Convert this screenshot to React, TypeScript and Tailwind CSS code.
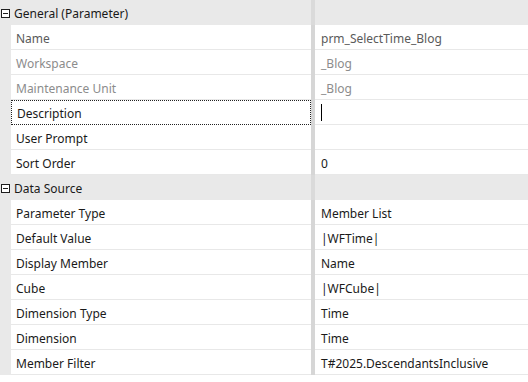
import React from "react";

type Row = { label: string; value: string; tone?: "dim" | "mid"; focus?: boolean; cursor?: boolean };
type Group = { title: string; rows: Row[] };

const groups: Group[] = [
  {
    title: "General (Parameter)",
    rows: [
      { label: "Name", value: "prm_SelectTime_Blog", tone: "mid" },
      { label: "Workspace", value: "_Blog", tone: "dim" },
      { label: "Maintenance Unit", value: "_Blog", tone: "dim" },
      { label: "Description", value: "", focus: true, cursor: true },
      { label: "User Prompt", value: "" },
      { label: "Sort Order", value: "0" },
    ],
  },
  {
    title: "Data Source",
    rows: [
      { label: "Parameter Type", value: "Member List" },
      { label: "Default Value", value: "|WFTime|" },
      { label: "Display Member", value: "Name" },
      { label: "Cube", value: "|WFCube|" },
      { label: "Dimension Type", value: "Time" },
      { label: "Dimension", value: "Time" },
      { label: "Member Filter", value: "T#2025.DescendantsInclusive" },
    ],
  },
];

function toneClass(t?: "dim" | "mid") {
  if (t === "dim") return "text-[#8c8c8c]";
  if (t === "mid") return "text-[#5a5a5a]";
  return "text-[#1a1a1a]";
}

function MinusBox() {
  return (
    <svg width="9" height="9" viewBox="0 0 9 9" className="block">
      <rect x="0.5" y="0.5" width="8" height="8" fill="white" stroke="#1e1e1e" />
      <line x1="2" y1="4.5" x2="7" y2="4.5" stroke="#1e1e1e" />
    </svg>
  );
}

export default function App() {
  return (
    <div
      className="w-[528px] h-[382px] bg-white text-[12px] leading-none"
      style={{ fontFamily: '"Noto Sans", "Open Sans", sans-serif' }}
    >
      {groups.map((g) => (
        <div key={g.title}>
          <div className="flex h-[25px] bg-[#e9e9e9]">
            <div className="w-[311px] flex items-center">
              <div className="w-[14px] flex pl-[1px] mt-[1px]">
                <MinusBox />
              </div>
              <span className="text-[#1a1a1a] pt-[3px]">{g.title}</span>
            </div>
            <div className="w-[4px] bg-[#dadada]" />
            <div className="flex-1" />
          </div>
          {g.rows.map((r) => (
            <div key={r.label} className="flex h-[25px]">
              <div className="w-[11px] bg-[#e9e9e9]" />
              <div
                className={`w-[300px] flex items-center pl-[5px] pt-[3px] ${
                  r.focus ? "border border-dotted border-[#222]" : "border-b border-[#e8e8e8]"
                } ${toneClass(r.tone)}`}
              >
                {r.label}
              </div>
              <div className="w-[4px] bg-[#d6d6d6]" />
              <div
                className={`flex-1 flex items-center pl-[6px] border-b border-[#e8e8e8] ${
                  r.cursor ? "" : "pt-[3px]"
                } ${toneClass(r.tone)}`}
              >
                {r.cursor ? <div className="w-[1px] h-[17px] bg-black" /> : r.value}
              </div>
            </div>
          ))}
        </div>
      ))}
    </div>
  );
}
